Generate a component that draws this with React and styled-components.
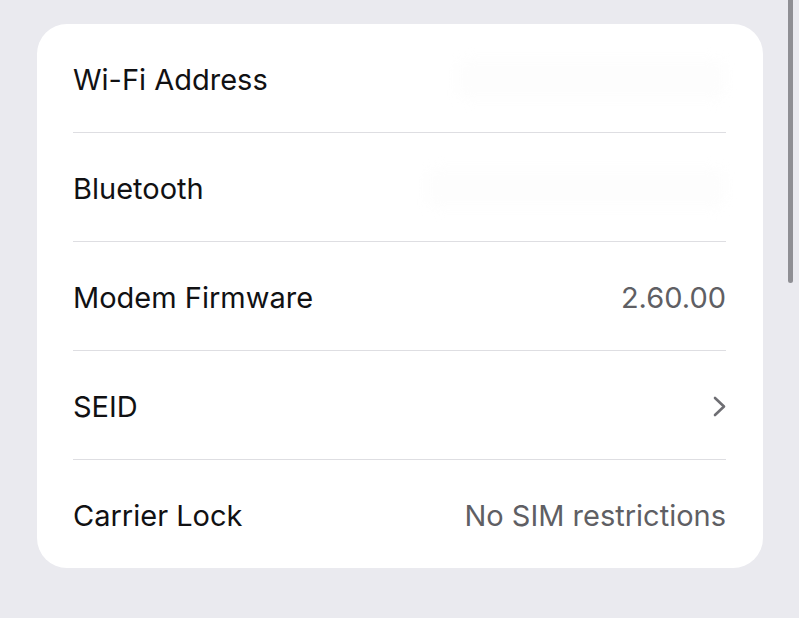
import React from "react";
import styled, { createGlobalStyle } from "styled-components";

const Global = createGlobalStyle`
  html, body {
    margin: 0;
    padding: 0;
    background: #eaeaef;
  }
  body {
    font-family: Inter, "Liberation Sans", Arial, sans-serif;
    -webkit-font-smoothing: antialiased;
  }
`;

const Page = styled.div`
  position: relative;
  width: 799px;
  height: 618px;
  overflow: hidden;
  padding: 24px 0 0 37px;
  box-sizing: border-box;
  background: #eaeaef;
`;

const Card = styled.div`
  width: 726px;
  background: #ffffff;
  border-radius: 30px;
  padding: 0 37px 0 36px;
  box-sizing: border-box;
`;

/* 108px tall rows; the text sits 1px below the optical centre */
const Row = styled.div`
  height: 106px;
  padding-top: 2px;
  display: flex;
  align-items: center;
  justify-content: space-between;
  box-sizing: content-box;
  border-bottom: ${(p) => (p.$last ? "none" : "1.5px solid #dedee2")};
`;

const Label = styled.span`
  font-size: 29px;
  color: #111113;
`;

const Value = styled.span`
  font-size: 29px;
  color: #5f5f64;
`;

const Masked = styled.span`
  width: ${(p) => p.$w}px;
  height: 40px;
  border-radius: 12px;
  background: #fdfdfd;
  filter: blur(6px);
`;

const Chevron = () => (
  <svg width="13" height="21" viewBox="0 0 13 21" fill="none">
    <path
      d="M2 2 L11 10.5 L2 19"
      stroke="#6e6e73"
      strokeWidth="2.6"
      strokeLinecap="round"
      strokeLinejoin="round"
    />
  </svg>
);

const ScrollThumb = styled.div`
  position: absolute;
  top: -6px;
  right: 6px;
  width: 5px;
  height: 289px;
  border-radius: 3px;
  background: #8f8f94;
`;

const rows = [
  { label: "Wi-Fi Address", masked: 270 },
  { label: "Bluetooth", masked: 300 },
  { label: "Modem Firmware", value: "2.60.00" },
  { label: "SEID", chevron: true },
  { label: "Carrier Lock", value: "No SIM restrictions" },
];

export default function App() {
  return (
    <>
      <Global />
      <Page>
        <Card>
          {rows.map((r, i) => (
            <Row key={r.label} $last={i === rows.length - 1}>
              <Label>{r.label}</Label>
              {r.value && <Value>{r.value}</Value>}
              {r.masked && <Masked $w={r.masked} />}
              {r.chevron && <Chevron />}
            </Row>
          ))}
        </Card>
        <ScrollThumb />
      </Page>
    </>
  );
}
